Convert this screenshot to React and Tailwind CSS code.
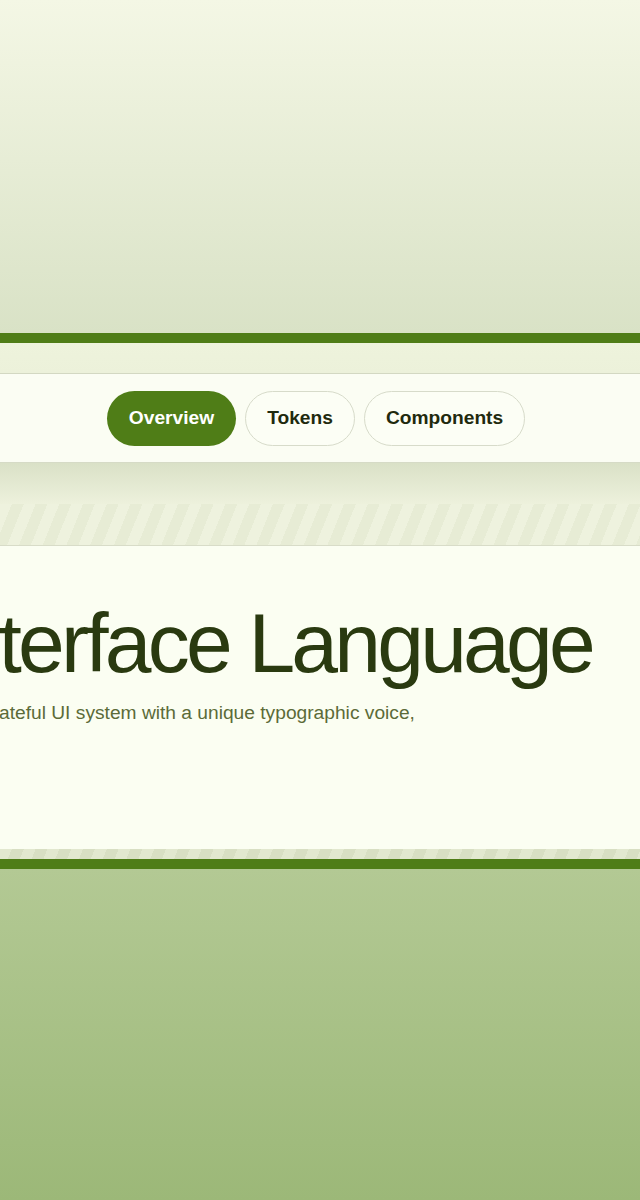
export default function App() {
  const font = { fontFamily: '"Liberation Sans", Arial, sans-serif' };
  return (
    <div className="w-[640px] h-[1200px] overflow-hidden flex flex-col" style={font}>
      <div className="h-[333px] shrink-0 bg-gradient-to-b from-[#f4f7e5] to-[#d9e2c6]" />
      <div className="h-[10px] shrink-0 bg-[#4f7d17]" />
      <div className="h-[31px] shrink-0 bg-gradient-to-b from-[#eef3dc] to-[#ecf1da] border-b border-[#d3d8c2]" />
      <nav className="h-[89px] shrink-0 bg-[#fbfdf3] border-b border-[#d6dbc6] flex items-center justify-center gap-[9px] pr-[8px]">
        <button className="h-[55px] px-[22px] rounded-full bg-[#4f7d17] text-white text-[19.2px] font-bold">Overview</button>
        <button className="h-[55px] px-[21px] rounded-full bg-[#fcfef5] border border-[#d7dbca] text-[#1f2a0e] text-[19.2px] font-bold">Tokens</button>
        <button className="h-[55px] px-[21px] rounded-full bg-[#fcfef5] border border-[#d7dbca] text-[#1f2a0e] text-[19.2px] font-bold">Components</button>
      </nav>
      <div className="h-[41px] shrink-0 bg-gradient-to-b from-[#dae1c7] to-[#edf1dc]" />
      <div className="h-[42px] shrink-0 border-b border-[#d8dcc8] bg-[#eef2dd] bg-[repeating-linear-gradient(112deg,#eef2de_0px,#eef2de_11px,#e7ecd5_11px,#e7ecd5_22px)]" />
      <main className="h-[303px] shrink-0 bg-[#fbfef2] pt-[55px] overflow-hidden">
        <h1 className="ml-[-64px] whitespace-nowrap text-[84px] leading-none font-normal tracking-[-0.045em] text-[#2a3a10]">Interface Language</h1>
        <p className="ml-[-33px] mt-[14px] whitespace-nowrap text-[19.2px] leading-[28.8px] text-[#5b6b38]">A stateful UI system with a unique typographic voice,</p>
      </main>
      <div className="h-[10px] shrink-0 bg-[#dfe5cb] bg-[repeating-linear-gradient(112deg,#e2e8cf_0px,#e2e8cf_11px,#d8dfc3_11px,#d8dfc3_22px)]" />
      <div className="h-[10px] shrink-0 bg-[#4f7d17]" />
      <div className="flex-1 bg-gradient-to-b from-[#b3c994] to-[#9cb878]" />
    </div>
  );
}
